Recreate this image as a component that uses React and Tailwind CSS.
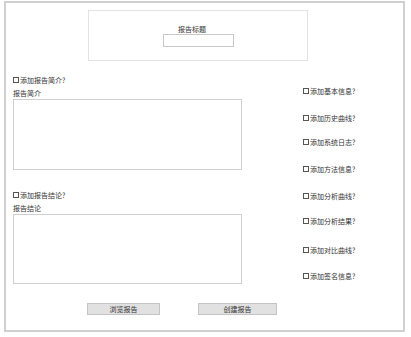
import React from 'react';

const font = { fontFamily: '"Noto Sans CJK SC", "Noto Sans", sans-serif' };

function Check({ label, className = '' }) {
  return (
    <div className={`flex items-center h-[10px] leading-[10px] text-[7px] text-[#333] ${className}`}>
      <span className="inline-block w-[6px] h-[6px] border border-[#555] bg-white mr-[1px]"></span>
      <span>{label}</span>
    </div>
  );
}

function App() {
  return (
    <div className="w-[411px] h-[337px] bg-white pt-[1px] pl-[4px]" style={font}>
      <div className="w-[401px] h-[331px] border-2 border-[#d0d0d0] flex flex-col">
        <div className="mt-[7px] ml-[82px] w-[220px] h-[51px] border border-[#e3e3e3] flex flex-col items-center pt-[13px]">
          <div className="h-[10px] leading-[10px] text-[7px] text-[#333] mr-[12px]">报告标题</div>
          <div className="w-[71px] h-[13px] border border-[#c8c8c8] bg-white"></div>
        </div>
        <div className="flex">
          <div className="ml-[7px] w-[229px] shrink-0 flex flex-col">
            <Check label="添加报告简介?" className="mt-[14px]" />
            <div className="mt-[3px] h-[10px] leading-[10px] text-[7px] text-[#333]">报告简介</div>
            <div className="mt-[1px] h-[71px] border border-[#cfcfcf]"></div>
            <Check label="添加报告结论?" className="mt-[20px]" />
            <div className="mt-[3px] h-[10px] leading-[10px] text-[7px] text-[#333]">报告结论</div>
            <div className="mt-[1px] h-[70px] border border-[#cfcfcf]"></div>
            <div className="mt-[19px] flex">
              <button className="shrink-0 ml-[74px] w-[73px] h-[12px] bg-[#e1e1e1] border border-[#c4c4c4] text-[7px] leading-[10px] text-[#333]">浏览报告</button>
              <button className="shrink-0 ml-[38px] w-[79px] h-[12px] bg-[#e1e1e1] border border-[#c4c4c4] text-[7px] leading-[10px] text-[#333]">创建报告</button>
            </div>
          </div>
          <div className="ml-[61px] flex flex-col">
            <Check label="添加基本信息?" className="mt-[25px]" />
            <Check label="添加历史曲线?" className="mt-[17px]" />
            <Check label="添加系统日志?" className="mt-[14px]" />
            <Check label="添加方法信息?" className="mt-[17px]" />
            <Check label="添加分析曲线?" className="mt-[17px]" />
            <Check label="添加分析结果?" className="mt-[15px]" />
            <Check label="添加对比曲线?" className="mt-[19px]" />
            <Check label="添加签名信息?" className="mt-[16px]" />
          </div>
        </div>
      </div>
    </div>
  );
}

export default App;
